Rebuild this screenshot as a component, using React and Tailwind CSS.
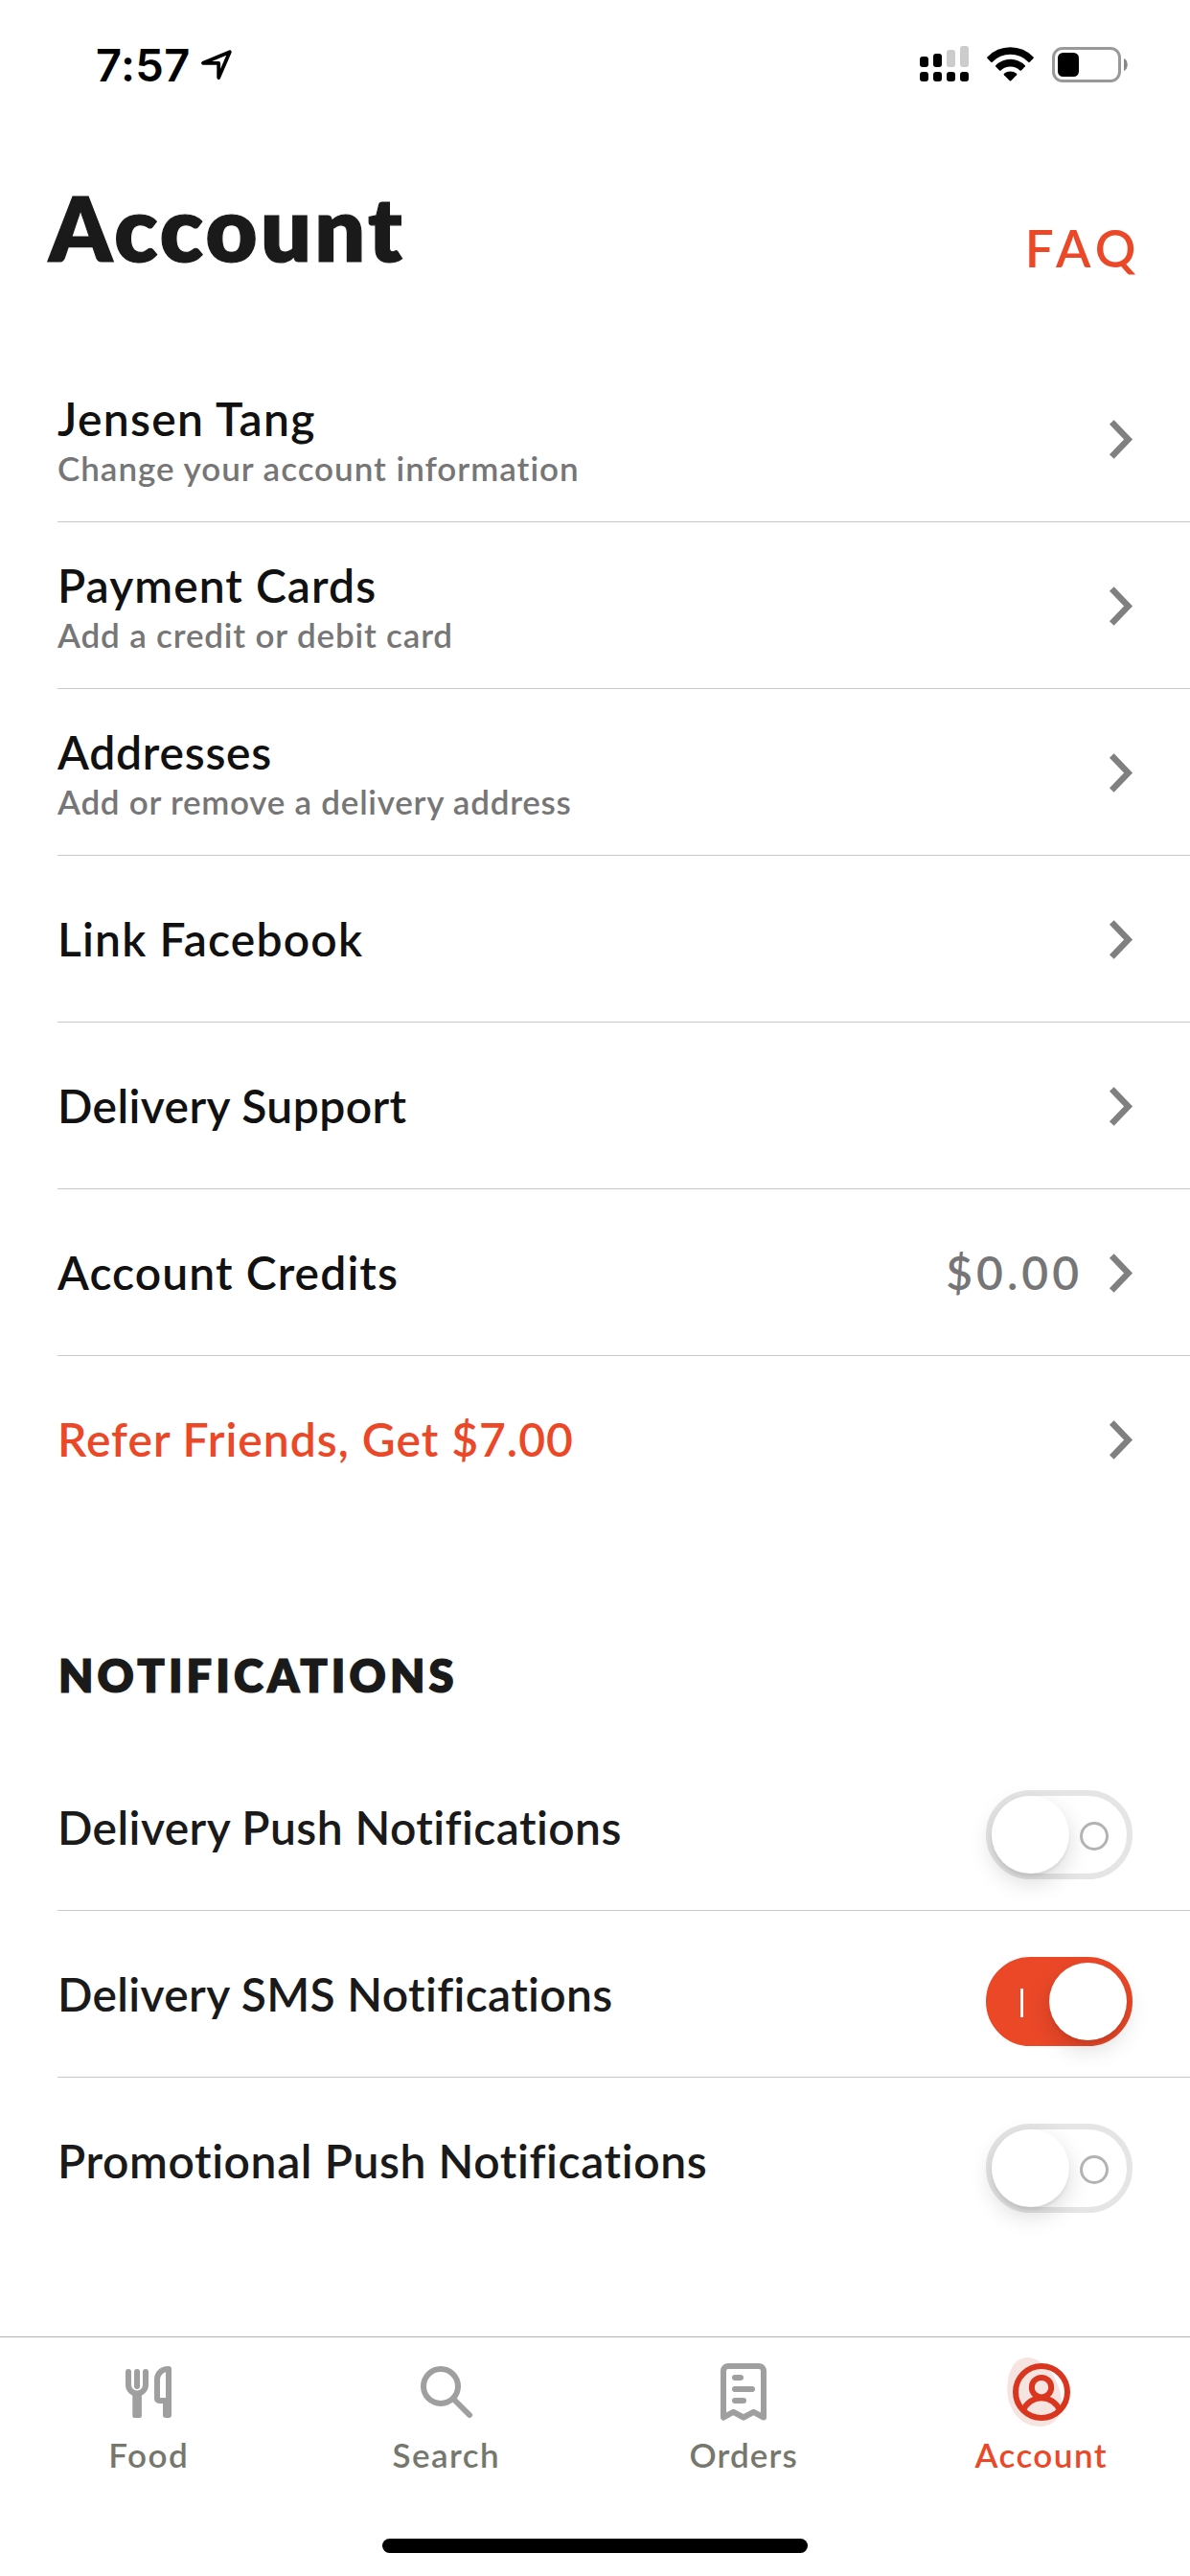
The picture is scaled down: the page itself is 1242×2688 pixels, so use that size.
import { useState } from "react";

const accountRows = [
  {
    title: "Jensen Tang",
    subtitle: "Change your account information",
    titleClass: "tracking-[1.3px]",
    subtitleClass: "tracking-[0.98px]",
  },
  {
    title: "Payment Cards",
    subtitle: "Add a credit or debit card",
    titleClass: "tracking-[1.05px]",
    subtitleClass: "tracking-[0.83px]",
  },
  {
    title: "Addresses",
    subtitle: "Add or remove a delivery address",
    titleClass: "tracking-[0.75px]",
    subtitleClass: "tracking-[0.74px]",
  },
  { title: "Link Facebook", titleClass: "tracking-[1.2px]" },
  { title: "Delivery Support", titleClass: "tracking-[0.4px]" },
  {
    title: "Account Credits",
    value: "$0.00",
    titleClass: "tracking-[1.1px]",
  },
  {
    title: "Refer Friends, Get $7.00",
    titleClass: "tracking-[1px] text-[#eb4828]",
  },
];

const notificationRows = [
  {
    id: "push",
    title: "Delivery Push Notifications",
    titleClass: "tracking-[0.42px]",
  },
  {
    id: "sms",
    title: "Delivery SMS Notifications",
    titleClass: "tracking-[0.34px]",
  },
  {
    id: "promo",
    title: "Promotional Push Notifications",
    titleClass: "tracking-[0.6px]",
  },
];

const tabs = [
  { label: "Food", Icon: FoodIcon, labelClass: "tracking-[1.5px]" },
  { label: "Search", Icon: SearchIcon, labelClass: "tracking-[1.4px]" },
  { label: "Orders", Icon: OrdersIcon, labelClass: "tracking-[1.15px]" },
  { label: "Account", Icon: AccountIcon, labelClass: "tracking-[1.45px]" },
];

function FoodIcon() {
  return (
    <svg className="size-[72px]" viewBox="0 0 72 72" fill="none">
      <path
        d="M15 15v13.5a9 9 0 0 0 18 0V15M24 15v15"
        stroke="#9f9f9f"
        strokeWidth="6"
        strokeLinecap="round"
      />
      <rect x="19.3" y="37" width="9.6" height="26" rx="2.6" fill="#9f9f9f" />
      <path
        fillRule="evenodd"
        d="M57 9a3 3 0 0 1 3 3v48a3 3 0 0 1-3 3h-3a3 3 0 0 1-3-3V48h-4a5 5 0 0 1-5-5V23C42 15 48 9 57 9ZM54 15.3C50 16.5 48 20 48 23v19h6Z"
        fill="#9f9f9f"
      />
    </svg>
  );
}

function SearchIcon() {
  return (
    <svg
      className="size-[72px]"
      viewBox="0 0 72 72"
      fill="none"
      stroke="#9f9f9f"
      strokeWidth="6"
      strokeLinecap="round"
    >
      <circle cx="30" cy="30" r="18" />
      <path d="M44 44l16 16" />
    </svg>
  );
}

function OrdersIcon() {
  return (
    <svg
      className="size-[72px]"
      viewBox="0 0 72 72"
      fill="none"
      stroke="#9f9f9f"
      strokeWidth="6"
      strokeLinecap="round"
      strokeLinejoin="round"
    >
      <path d="M15 62.5V14a5 5 0 0 1 5-5h32a5 5 0 0 1 5 5v48.5l-10.5-5.7L36 62.5l-10.5-5.7Z" />
      <path d="M27 21h6M27 33h18M27 45h9" />
    </svg>
  );
}

function AccountIcon() {
  return (
    <svg className="size-[72px]" viewBox="0 0 72 72" fill="none">
      <path
        d="M21 0C40 0 57 26 57 48c0 16-11 24-23 24C14 72 .3 54 .3 33 .3 14 8 0 21 0Z"
        fill="#f6e4e1"
      />
      <g stroke="#d93620" strokeWidth="6">
        <circle cx="36" cy="36" r="27" />
        <circle cx="36" cy="31.2" r="10.2" />
        <path d="M17 55a20.5 20.5 0 0 1 38 0" />
      </g>
    </svg>
  );
}

function Chevron() {
  return (
    <svg className="h-[44px] w-[28px] shrink-0" viewBox="0 0 28 44" fill="none">
      <path d="M4.3 4.4 21.6 22.5 4.3 40.6" stroke="#808080" strokeWidth="6.5" />
    </svg>
  );
}

function StatusBar() {
  return (
    <div className="flex h-[132px] items-start pt-[40px] pr-[65px] pl-[100px]">
      <span className="w-[108px] font-[Inter,sans-serif] text-[47px] leading-[56px] font-semibold tracking-[0.4px] text-black">
        7:57
      </span>
      <svg className="mt-[10px] size-[36px]" viewBox="0 0 36 36" fill="none">
        <path
          d="M4 15.8 31.8 4.2 20.2 31V15.8Z"
          stroke="#000"
          strokeWidth="3.8"
          strokeLinejoin="round"
        />
      </svg>

      <div className="mt-[8px] ml-auto flex gap-[19px]">
        {/* Dual SIM signal */}
        <svg className="h-[38px] w-[51px]" viewBox="0 0 51 38">
          <rect x="0" y="11" width="9" height="11" rx="3" />
          <rect x="14" y="8" width="9" height="14" rx="3" />
          <rect x="28" y="4" width="9" height="18" rx="3" fill="#ccc" />
          <rect x="42" y="0" width="9" height="22" rx="3" fill="#ccc" />
          <rect x="0" y="27" width="9" height="10" rx="3" />
          <rect x="14" y="27" width="9" height="10" rx="3" />
          <rect x="28" y="27" width="9" height="10" rx="3" />
          <rect x="42" y="27" width="9" height="10" rx="3" />
        </svg>
        {/* Wifi */}
        <svg className="h-[38px] w-[49px]" viewBox="0 -1.2 49 38">
          <path d="M.5 10.3a33 33 0 0 1 48 0 1 1 0 0 1 0 1.4l-3.8 3.9a1 1 0 0 1-1.4 0 26 26 0 0 0-37.6 0 1 1 0 0 1-1.4 0L.5 11.7a1 1 0 0 1 0-1.4Z" />
          <path d="M9.2 19a21.3 21.3 0 0 1 30.6 0 1 1 0 0 1 0 1.4l-3.9 3.9a1 1 0 0 1-1.4 0 14.2 14.2 0 0 0-20 0 1 1 0 0 1-1.4 0l-3.9-3.9a1 1 0 0 1 0-1.4Z" />
          <path d="M17.9 27.6a11 11 0 0 1 13.2 0 1 1 0 0 1 0 1.4l-5.9 6a1 1 0 0 1-1.4 0l-5.9-6a1 1 0 0 1 0-1.4Z" />
        </svg>
        {/* Battery */}
        <svg className="h-[38px] w-[79px]" viewBox="0 0 79 38" fill="none">
          <rect
            x="1.5"
            y="2.5"
            width="69"
            height="34"
            rx="9.5"
            stroke="#999"
            strokeWidth="3"
          />
          <rect x="6" y="7" width="22" height="25" rx="5.5" fill="#000" />
          <path d="M75 13c5 2 5 11 0 13Z" fill="#888" />
        </svg>
      </div>
    </div>
  );
}

function Switch({ on, onClick }) {
  const knob = (
    <span className="size-[81px] rounded-full bg-white shadow-[0_9px_24px_rgba(0,0,0,0.15),0_3px_3px_rgba(0,0,0,0.06)]" />
  );

  if (on) {
    return (
      <button
        type="button"
        onClick={onClick}
        className="mt-[16px] flex h-[93px] w-[153px] items-center justify-between rounded-full border-[6px] border-[#eb4828] bg-[#eb4828] pl-[30px]"
      >
        <span className="mt-[3px] h-[30px] w-[3px] bg-white" />
        {knob}
      </button>
    );
  }

  return (
    <button
      type="button"
      onClick={onClick}
      className="mt-[16px] flex h-[93px] w-[153px] items-center justify-between rounded-full border-[6px] border-[#e5e5e5] bg-white pr-[19px]"
    >
      {knob}
      <span className="mt-[3px] size-[30px] rounded-full border-[3px] border-[#b3b3b3]" />
    </button>
  );
}

export default function App() {
  const [enabled, setEnabled] = useState({ push: false, sms: true, promo: false });

  const toggle = (id) => {
    setEnabled({ ...enabled, [id]: !enabled[id] });
  };

  return (
    <div className="flex h-[2688px] w-[1242px] flex-col overflow-hidden bg-white font-[Lato,sans-serif] text-[#111]">
      <StatusBar />

      {/* Header */}
      <div className="flex h-[239px] items-start justify-between pt-[55px] pr-[51px] pl-[51px]">
        <h1 className="text-[93px] leading-[100px] font-extrabold tracking-[3.3px] text-[#1a1a1a] [-webkit-text-stroke:1.2px_#1a1a1a]">
          Account
        </h1>
        <a className="mt-[42px] text-[53px] leading-[60px] font-semibold tracking-[5.5px] text-[#eb4828]">
          FAQ
        </a>
      </div>

      {/* Account rows */}
      <div className="ml-[60px]">
        {accountRows.map((row) => (
          <div
            key={row.title}
            className="flex h-[174px] items-center border-b border-[#c8c7cc] pr-[58px] last:border-transparent"
          >
            <div className={row.subtitle ? "flex-1 pt-[10px]" : "flex-1"}>
              <p className={`text-[48px] leading-[50px] font-semibold ${row.titleClass}`}>
                {row.title}
              </p>
              {row.subtitle && (
                <p
                  className={`text-[35px] leading-[52px] font-semibold text-[#767676] ${row.subtitleClass}`}
                >
                  {row.subtitle}
                </p>
              )}
            </div>
            {row.value && (
              <span className="mr-[26px] text-[48px] leading-[50px] font-semibold tracking-[4px] text-[#767676]">
                {row.value}
              </span>
            )}
            <Chevron />
          </div>
        ))}
      </div>

      {/* Notifications */}
      <h2 className="mt-[133px] ml-[61px] h-[98px] text-[47px] leading-[52px] font-extrabold tracking-[4.1px] text-[#1a1a1a] [-webkit-text-stroke:1.2px_#1a1a1a]">
        NOTIFICATIONS
      </h2>
      <div className="ml-[60px]">
        {notificationRows.map((row) => (
          <div
            key={row.id}
            className="flex h-[174px] items-center justify-between border-b border-[#c8c7cc] pr-[60px] last:border-transparent"
          >
            <p
              className={`text-[48px] leading-[50px] font-semibold text-[#1a1a1a] ${row.titleClass}`}
            >
              {row.title}
            </p>
            <Switch on={enabled[row.id]} onClick={() => toggle(row.id)} />
          </div>
        ))}
      </div>

      {/* Tab bar */}
      <div className="mt-auto flex h-[250px] flex-col items-center justify-between border-t border-[#b3b3b3] pt-[21px] pb-[24px]">
        <div className="grid w-full grid-cols-4">
          {tabs.map(({ label, Icon, labelClass }) => (
            <div key={label} className="flex flex-col items-center gap-[8px]">
              <Icon />
              <span
                className={`text-[35px] leading-[42px] font-semibold ${labelClass} ${
                  label === "Account" ? "text-[#eb4828]" : "text-[#76776d]"
                }`}
              >
                {label}
              </span>
            </div>
          ))}
        </div>
        <div className="h-[15px] w-[444px] rounded-full bg-black" />
      </div>
    </div>
  );
}
